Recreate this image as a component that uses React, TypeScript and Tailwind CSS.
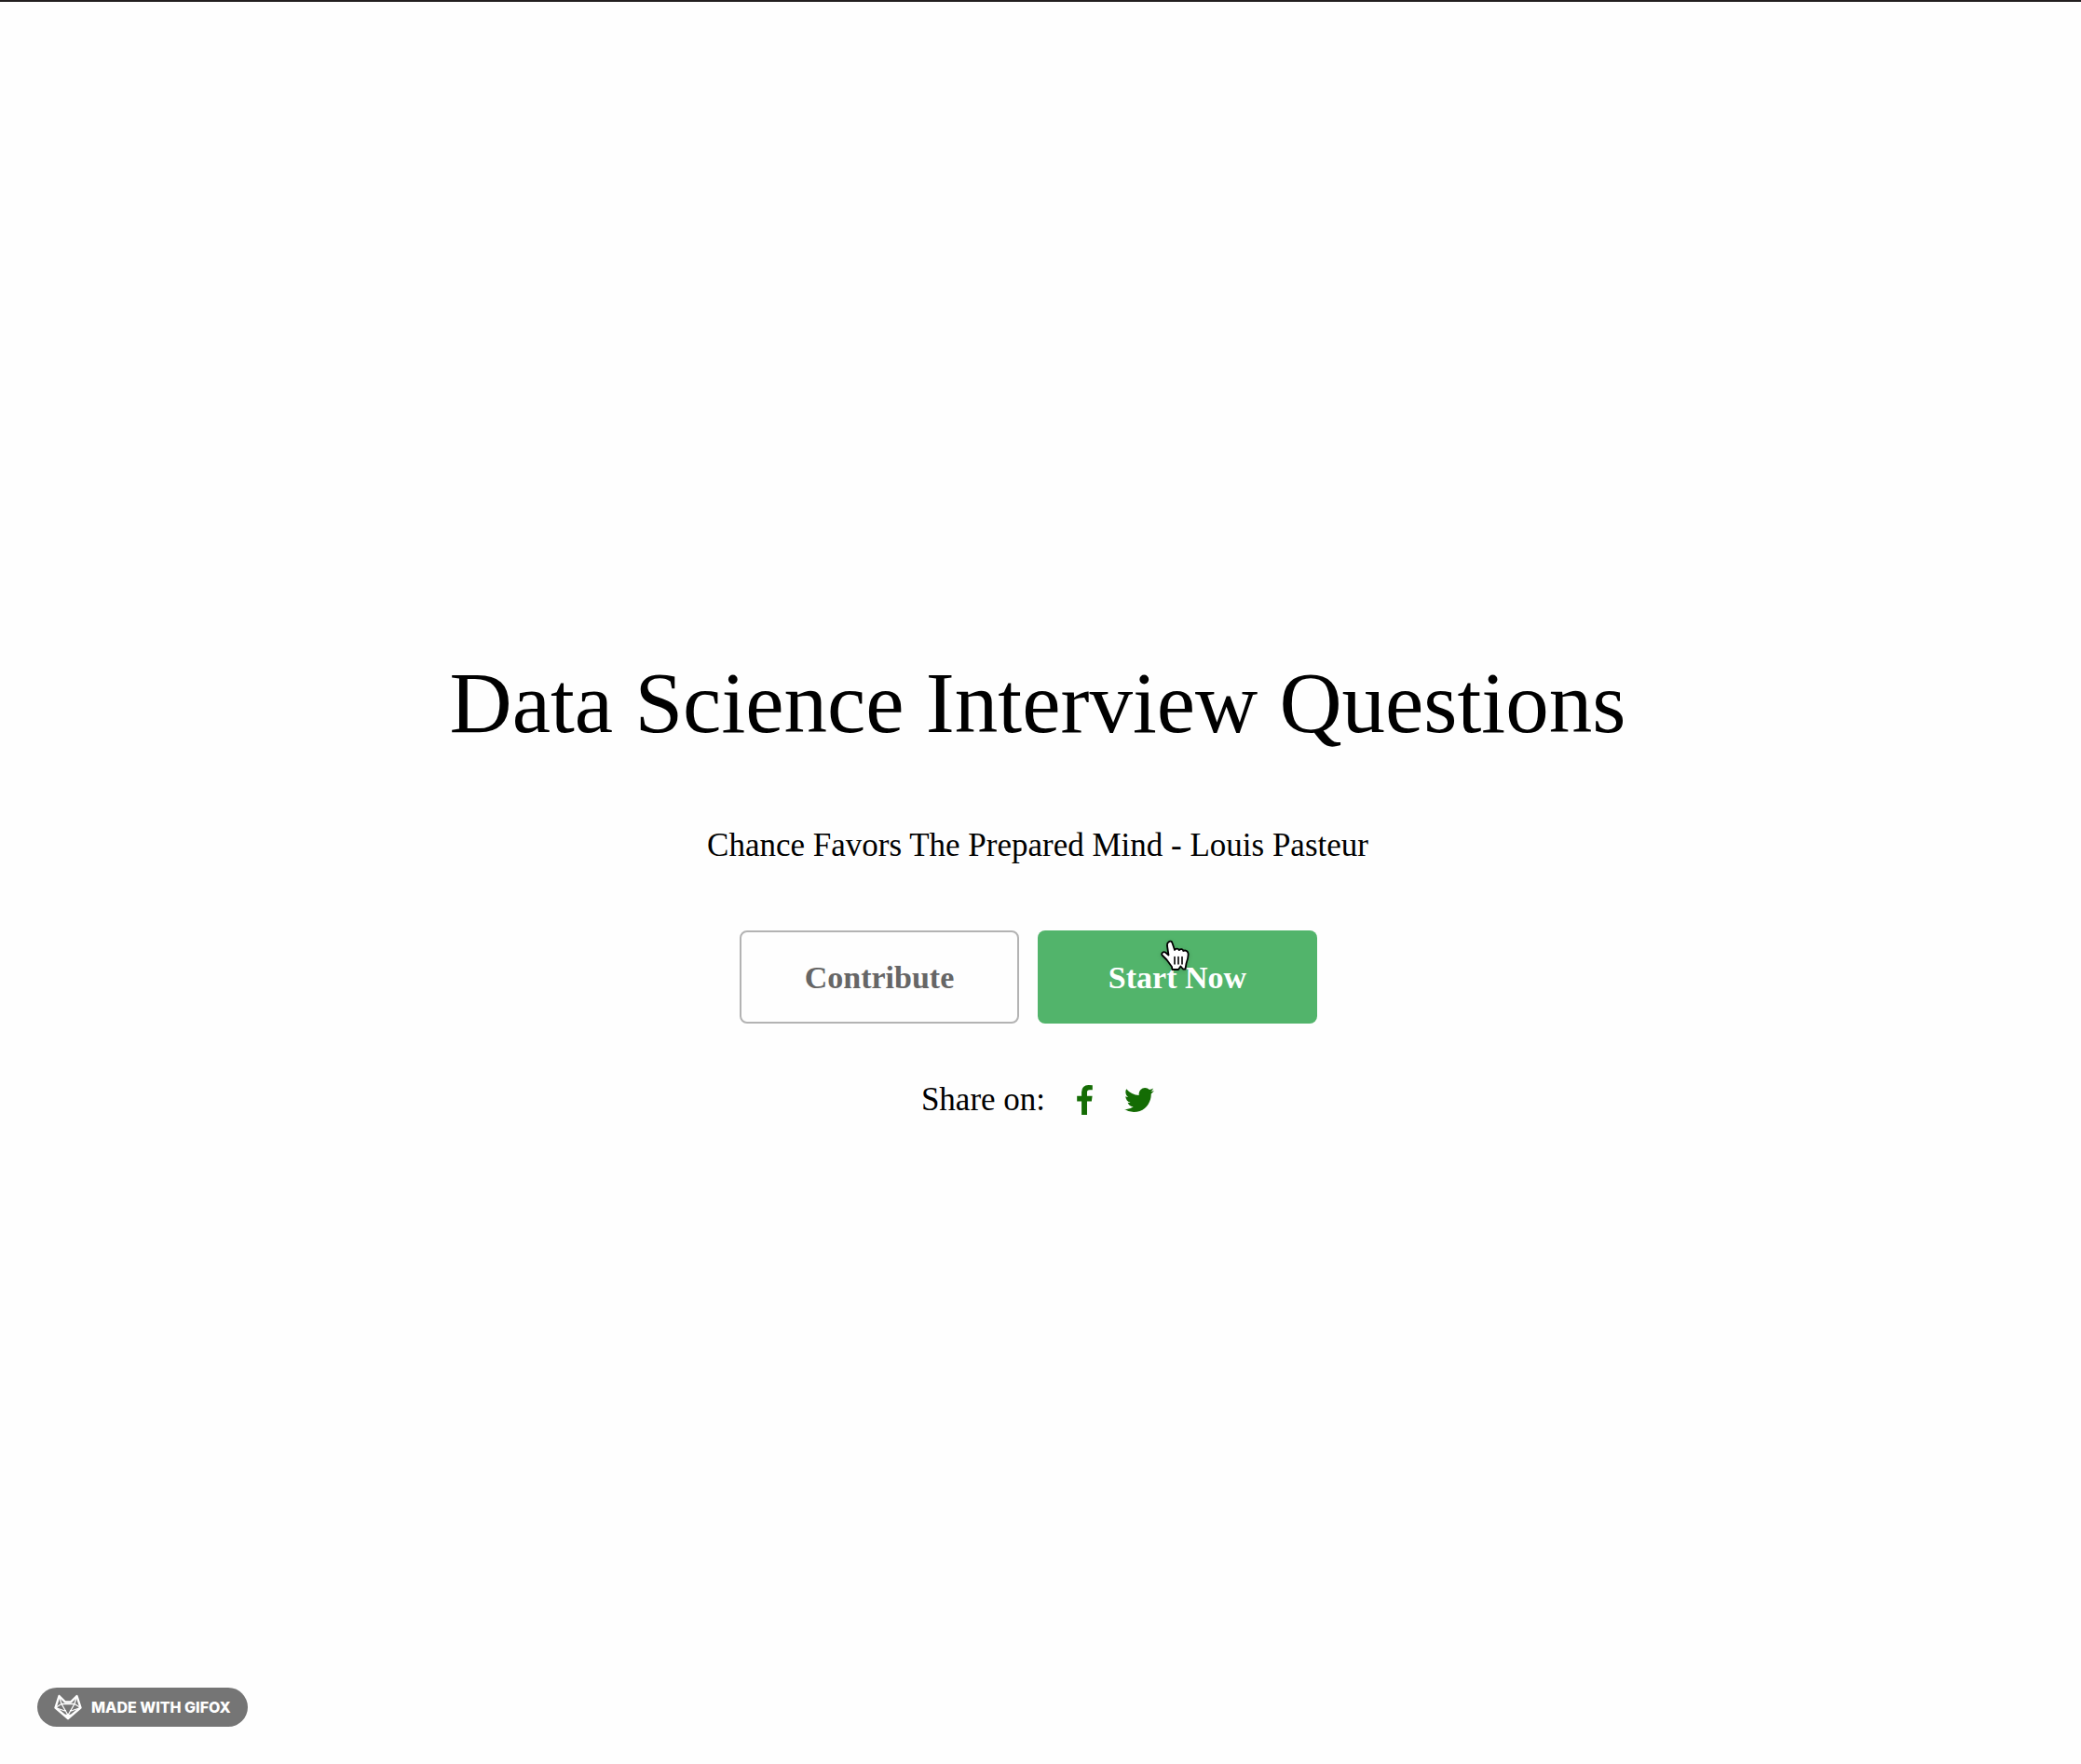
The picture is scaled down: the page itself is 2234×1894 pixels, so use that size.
function HandCursor() {
  return (
    <svg
      aria-hidden="true"
      viewBox="0 0 32 34"
      className="pointer-events-none absolute top-[10px] left-[132px] h-[34px] w-8 drop-shadow-sm"
    >
      <path
        d="M8.500 2.500C10 1 12 1.500 12.500 3.500L15 11C16.500 9 19.300 9.300 19.800 11.200C21.500 9.500 23.800 10 24.300 12C26.500 10.800 29 12 29.500 14.500C30 18.500 29 21.500 27.500 25.500L26.500 31.500L24 31.500L21.500 28.500L19 32L12.500 32L12 29C10 26.500 8 23.500 6.500 21.500L1.500 16.500C0.500 14.500 2.500 12.500 5 13.500L8.500 16.500L7 6.500C6.800 4.500 7.200 3.300 8.500 2.500Z"
        fill="#fff"
        stroke="#000"
        strokeWidth="1.800"
        strokeLinejoin="round"
      />
      <path d="M15 18.500V26M19 18.500V26M23 18.500V26" stroke="#000" strokeWidth="1.600" strokeLinecap="round" />
    </svg>
  );
}

function FacebookIcon() {
  return (
    <svg aria-hidden="true" viewBox="479 0 864 1664" className="h-8 w-[17px]" fill="currentColor">
      <path d="M1343 12v264h-157q-86 0-116 36t-30 108v189h293l-39 296h-254v759h-306v-759h-255v-296h255v-218q0-186 104-288.5t277-102.5q147 0 228 12z" />
    </svg>
  );
}

function TwitterIcon() {
  return (
    <svg aria-hidden="true" viewBox="108 256 1576 1280" className="h-[26px] w-8" fill="currentColor">
      <path d="M1684 408q-67 98-162 167 1 14 1 42 0 130-38 259.5t-115.5 248.5-184.5 210.5-258 146-323 54.5q-271 0-496-145 35 4 78 4 225 0 401-138-105-2-188-64.5t-114-159.5q33 5 61 5 43 0 85-11-112-23-185.5-111.5t-73.5-205.5v-4q68 38 146 41-66-44-105-115t-39-154q0-88 44-163 121 149 294.5 238.5t371.5 99.5q-8-38-8-74 0-134 94.5-228.5t228.5-94.5q140 0 236 102 109-21 205-78-37 115-142 178 93-10 186-50z" />
    </svg>
  );
}

function FoxLogo() {
  return (
    <svg aria-hidden="true" viewBox="0 0 30 28" className="h-7 w-[30px]" fill="none" stroke="#fff" strokeWidth="1.300" strokeLinejoin="round">
      <path d="M5.500 2L12 8.500H18L24.500 2L28.500 14.500L15 26L1.500 14.500Z" strokeWidth="2.400" />
      <path d="M5.500 2L8 10.500H22L24.500 2M8 10.500L15 22.500L22 10.500M8 10.500L1.500 14.500L13 18.500M22 10.500L28.500 14.500L17 18.500" />
      <path d="M11.500 22.500H18.500L15 26.500Z" fill="#fff" />
    </svg>
  );
}

export default function App() {
  return (
    <div className="flex min-h-screen flex-col border-t-2 border-[#231f20] bg-[#fefefe] font-[Palatino,'Liberation_Serif',serif] text-black">
      <main className="flex flex-1 flex-col items-center pt-[698px] pr-1.5">
        <h1 className="text-[93px] leading-[110px]">Data Science Interview Questions</h1>
        <p className="mt-[78px] text-[35px] leading-10">Chance Favors The Prepared Mind - Louis Pasteur</p>
        <div className="mt-[71px] flex gap-5 pr-5">
          <button
            type="button"
            className="h-[100px] w-[300px] rounded-lg border-2 border-[#b3b3b3] text-[34px] font-bold text-[#666]"
          >
            Contribute
          </button>
          <button
            type="button"
            className="relative h-[100px] w-[300px] rounded-lg bg-[#52b46b] text-[34px] font-bold text-white"
          >
            Start Now
            <HandCursor />
          </button>
        </div>
        <div className="mt-[62px] flex items-center">
          <span className="text-[35px] leading-10">Share on:</span>
          <a href="#facebook" aria-label="Share on Facebook" className="ml-[34px] text-[#146c04]">
            <FacebookIcon />
          </a>
          <a href="#twitter" aria-label="Share on Twitter" className="ml-[34px] text-[#146c04]">
            <TwitterIcon />
          </a>
        </div>
      </main>
      <footer className="flex pb-10 pl-10">
        <a
          href="#gifox"
          className="flex h-[42px] items-center gap-2.5 rounded-full bg-[#757575] px-[18px] font-[Inter,sans-serif] text-[16px] font-extrabold text-white"
        >
          <FoxLogo />
          MADE WITH GIFOX
        </a>
      </footer>
    </div>
  );
}
